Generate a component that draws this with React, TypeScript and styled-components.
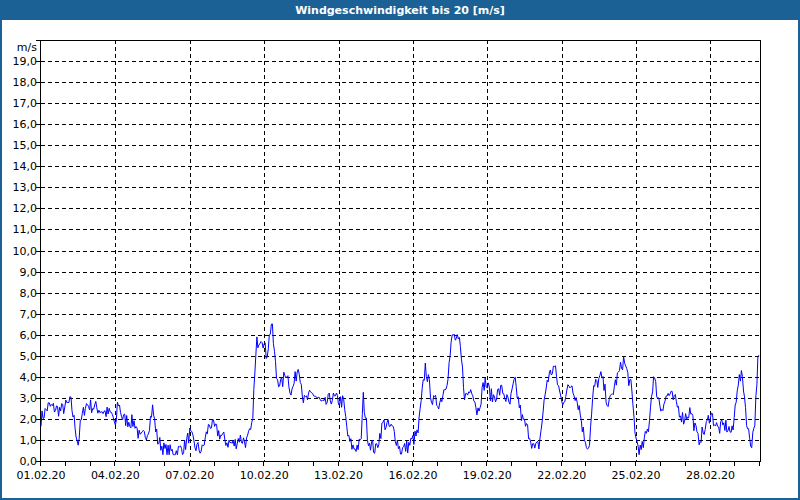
import React from "react";
import styled, { createGlobalStyle } from "styled-components";

const G = createGlobalStyle`
  html, body { margin: 0; padding: 0; background: #fff; }
  body { font-family: "DejaVu Sans", Verdana, sans-serif; }
`;
const Frame = styled.div`
  width: 800px; height: 500px; box-sizing: border-box;
  border: 2px solid #1c6195; border-top: none;
  display: flex; flex-direction: column; background: #fff;
`;
const Title = styled.div`
  height: 20px; margin: 0 -2px; background: #1c6195; color: #fff;
  font: bold 11px "DejaVu Sans", Verdana, sans-serif;
  display: flex; align-items: center; justify-content: center;
`;
const Chart = styled.svg`
  display: block; flex: 1;
`;

const OX = 2, OY = 20;
const x0 = 41 - OX, x1 = 760 - OX, yb = 461 - OY, yt = 40 - OY;
const dayW = (x1 - x0) / 29;
const sy = (v: number) => yb - (v / 20) * (yb - yt);

const keys: [number, number][] = [
  [0, 2], [0.3, 2.6], [0.8, 2.4], [1.2, 2.8], [1.4, 1.5], [1.5, 0.8], [1.6, 1.8], [1.8, 2.7], [2.3, 2.5], [2.6, 2.3], [2.9, 2.2], [3, 1.4], [3.1, 2.9], [3.3, 2.0], [3.8, 1.8], [4.0, 1.0], [4.3, 1.4], [4.5, 2.5], [4.7, 1.0], [5.0, 0.5], [5.4, 0.4], [5.8, 0.7], [6.0, 1.3], [6.2, 0.7], [6.5, 0.5], [6.8, 1.8], [7.2, 1.3], [7.5, 0.9], [7.8, 0.8], [8.0, 1.1], [8.3, 0.9], [8.5, 1.5], [8.7, 5.6], [8.9, 6.0], [9.1, 5.0], [9.3, 6.6], [9.5, 4.0], [9.7, 3.6], [9.9, 4.3], [10.1, 3.2], [10.4, 4.6], [10.6, 2.8], [11.0, 3.2], [11.4, 2.6], [11.7, 3.0], [12.2, 2.8], [12.4, 1.0], [12.6, 0.6], [12.9, 0.8], [13.0, 3.0], [13.2, 1.0], [13.5, 0.5], [13.8, 1.8], [14.2, 1.5], [14.5, 0.5], [14.8, 0.7], [15.2, 1.3], [15.5, 4.5], [15.8, 2.8], [16.1, 2.8], [16.4, 4.0], [16.6, 6.0], [16.9, 5.5], [17.1, 3.0], [17.4, 3.5], [17.6, 2.3], [17.9, 3.8], [18.2, 3.0], [18.6, 3.4], [18.9, 2.6], [19.1, 3.8], [19.4, 2.0], [19.7, 1.3], [19.9, 0.5], [20.1, 0.8], [20.4, 3.8], [20.7, 4.5], [21.0, 2.8], [21.4, 3.7], [21.7, 2.6], [21.9, 1.2], [22.1, 0.6], [22.3, 3.5], [22.6, 4.0], [22.9, 2.6], [23.2, 3.8], [23.5, 4.8], [23.8, 3.5], [24.0, 1.0], [24.2, 0.4], [24.5, 1.6], [24.7, 4.0], [25.0, 2.5], [25.3, 3.2], [25.6, 2.8], [25.9, 2.0], [26.2, 2.4], [26.5, 1.0], [26.8, 1.5], [27.0, 2.3], [27.3, 1.5], [27.6, 1.7], [27.9, 1.3], [28.1, 3.8], [28.3, 4.0], [28.5, 1.5], [28.65, 0.8], [28.8, 2.0], [28.9, 4.6], [29.05, 5.3], [29.1, 2.8], [29.2, 2.5],
];
function interp(t: number) {
  for (let i = 0; i < keys.length - 1; i++) {
    const [a, va] = keys[i], [b, vb] = keys[i + 1];
    if (t >= a && t <= b) return va + ((vb - va) * (t - a)) / (b - a);
  }
  return 2.5;
}
let seed = 7;
const rnd = () => { seed = (seed * 16807) % 2147483647; return seed / 2147483647; };
const pts: string[] = [];
for (let t = 0; t <= 29; t += 1 / 24) {
  const v = Math.max(0.3, interp(t) + (rnd() - 0.5) * 0.7);
  pts.push(`${(x0 + t * dayW).toFixed(1)},${sy(v).toFixed(1)}`);
}

const labels = ["01.02.20", "04.02.20", "07.02.20", "10.02.20", "13.02.20", "16.02.20", "19.02.20", "22.02.20", "25.02.20", "28.02.20"];

export default function App() {
  return (
    <>
      <G />
      <Frame>
        <Title>Windgeschwindigkeit bis 20 [m/s]</Title>
        <Chart viewBox="0 0 796 478" width={796} height={478}>
          <g stroke="#000" strokeWidth={1} strokeDasharray="4 3" shapeRendering="crispEdges">
            {Array.from({ length: 19 }, (_, i) => (
              <line key={"h" + i} x1={x0} x2={x1} y1={Math.round(sy(i + 1)) + 0.5} y2={Math.round(sy(i + 1)) + 0.5} />
            ))}
            {Array.from({ length: 9 }, (_, i) => (
              <line key={"v" + i} x1={Math.round(x0 + (i + 1) * 3 * dayW) + 0.5} x2={Math.round(x0 + (i + 1) * 3 * dayW) + 0.5} y1={yt} y2={yb} />
            ))}
          </g>
          <g stroke="#000" strokeWidth={1} shapeRendering="crispEdges" fill="none">
            <rect x={x0 - 0.5} y={yt + 0.5} width={x1 - x0 + 1} height={yb - yt} />
            {Array.from({ length: 30 }, (_, i) => (
              <line key={"t" + i} x1={Math.round(x0 + i * dayW) - 0.5} x2={Math.round(x0 + i * dayW) - 0.5} y1={yb} y2={yb + 5} />
            ))}
            {Array.from({ length: 21 }, (_, i) => (
              <line key={"yt" + i} x1={x0 - 5} x2={x0} y1={Math.round(sy(i)) + 0.5} y2={Math.round(sy(i)) + 0.5} />
            ))}
          </g>
          <polyline points={pts.join(" ")} fill="none" stroke="#0000ff" strokeWidth={1} />
          <g fontFamily="DejaVu Sans, Verdana, sans-serif" fontSize={11} fill="#000">
            <text x={x0 - 4} y={yt + 11} textAnchor="end">m/s</text>
            {Array.from({ length: 20 }, (_, i) => (
              <text key={"yl" + i} x={x0 - 4} y={sy(i) + 4} textAnchor="end">{i},0</text>
            ))}
            {labels.map((l, i) => (
              <text key={l} x={x0 + i * 3 * dayW} y={yb + 18} textAnchor="middle">{l}</text>
            ))}
          </g>
        </Chart>
      </Frame>
    </>
  );
}
